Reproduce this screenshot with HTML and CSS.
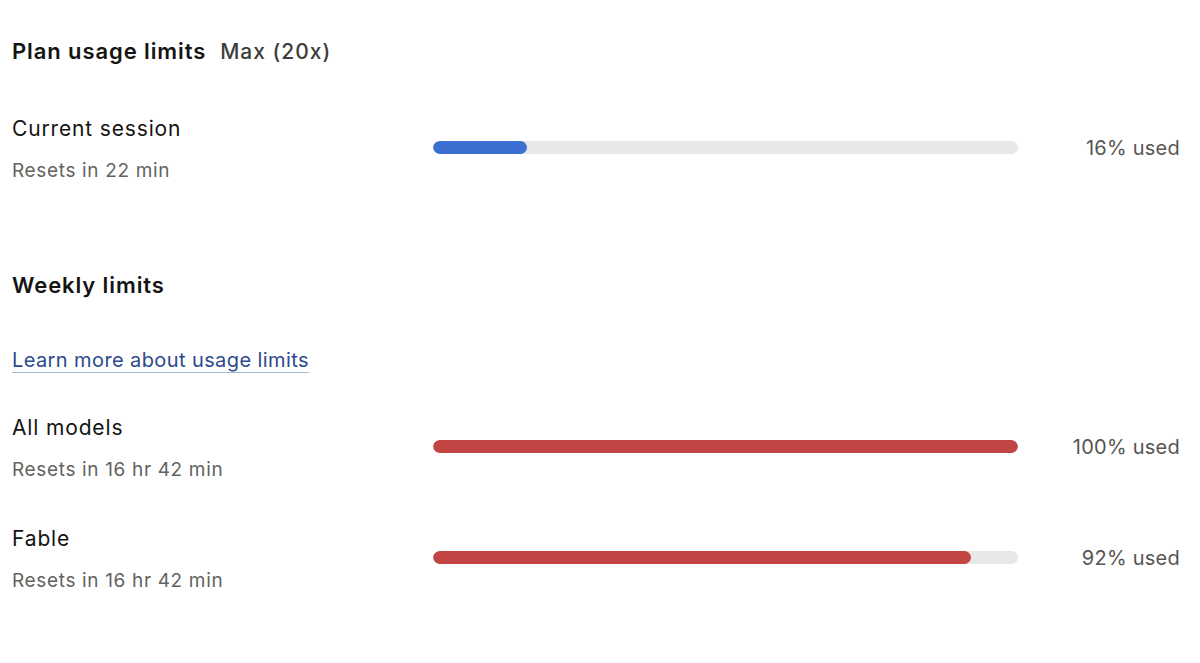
FILE: index.html
```html
<!DOCTYPE html>
<html lang="en">
<head>
    <meta charset="UTF-8">
    <meta name="viewport" content="width=device-width, initial-scale=1.0">
    <title>Plan usage limits</title>
    <link rel="stylesheet" href="styles.css">
</head>
<body>
    <div class="page">
        <div class="plan-title">
            <h1>Plan usage limits</h1>
            <span class="plan-name">Max (20x)</span>
        </div>

        <div class="usage-row first">
            <div class="usage-label">
                <div class="label-name">Current session</div>
                <div class="label-reset">Resets in 22 min</div>
            </div>
            <div class="bar">
                <div class="bar-fill blue" style="width: 16%"></div>
            </div>
            <div class="usage-value">16% used</div>
        </div>

        <h2>Weekly limits</h2>

        <a href="#" class="learn-link">Learn more about usage limits</a>

        <div class="usage-row weekly">
            <div class="usage-label">
                <div class="label-name">All models</div>
                <div class="label-reset">Resets in 16 hr 42 min</div>
            </div>
            <div class="bar">
                <div class="bar-fill red" style="width: 100%"></div>
            </div>
            <div class="usage-value">100% used</div>
        </div>

        <div class="usage-row">
            <div class="usage-label">
                <div class="label-name">Fable</div>
                <div class="label-reset">Resets in 16 hr 42 min</div>
            </div>
            <div class="bar">
                <div class="bar-fill red" style="width: 92%"></div>
            </div>
            <div class="usage-value">92% used</div>
        </div>
    </div>
</body>
</html>
```
FILE: styles.css
```css
* {
    margin: 0;
    padding: 0;
    box-sizing: border-box;
}

body {
    font-family: 'Inter', 'Noto Sans', sans-serif;
    background-color: #fff;
    color: #141413;
}

.page {
    padding: 36px 20px 0 12px;
}

.plan-title {
    display: flex;
    align-items: baseline;
    gap: 14px;
}

h1 {
    font-size: 22px;
    line-height: 30px;
    font-weight: 600;
    letter-spacing: 0.9px;
}

.plan-name {
    font-size: 21px;
    font-weight: 500;
    color: #3d3d3a;
    letter-spacing: 1px;
}

h2 {
    font-size: 22px;
    line-height: 30px;
    font-weight: 600;
    letter-spacing: 0.9px;
    margin-top: 85px;
}

.learn-link {
    display: inline-block;
    margin-top: 46px;
    font-size: 20px;
    line-height: 28px;
    letter-spacing: 0.4px;
    color: #2b4a8c;
    text-decoration: underline;
    text-decoration-color: #a6b6d3;
    text-underline-offset: 5px;
    text-decoration-thickness: 1px;
}

.usage-row {
    display: flex;
    align-items: center;
    margin-top: 41px;
}

.usage-row.first {
    margin-top: 49px;
}

.usage-row.weekly {
    margin-top: 40px;
}

.usage-label {
    width: 421px;
    flex-shrink: 0;
}

.label-name {
    font-size: 21px;
    line-height: 28px;
    letter-spacing: 0.85px;
}

.label-reset {
    margin-top: 14px;
    font-size: 19px;
    line-height: 28px;
    letter-spacing: 0.65px;
    color: #636360;
}

.bar {
    width: 585px;
    height: 13px;
    flex-shrink: 0;
    background-color: #e8e8e6;
    border-radius: 7px;
    overflow: hidden;
    margin-bottom: 5px;
}

.bar-fill {
    height: 100%;
    border-radius: 7px;
}

.bar-fill.blue {
    background-color: #3b70d2;
}

.bar-fill.red {
    background-color: #c04543;
}

.usage-value {
    flex: 1;
    text-align: right;
    font-size: 20px;
    letter-spacing: 0.25px;
    color: #555552;
    margin-bottom: 5px;
}
```
